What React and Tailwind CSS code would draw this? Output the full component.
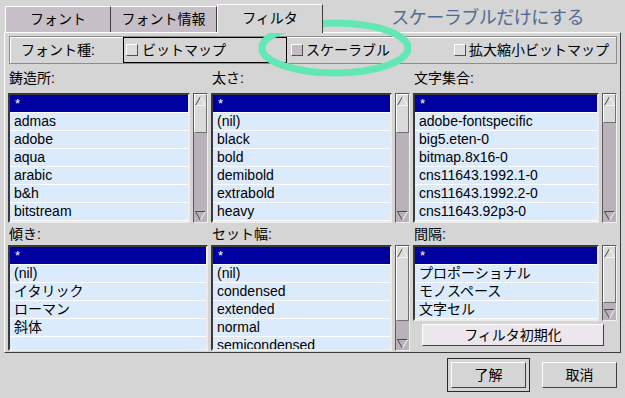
import React from 'react';

const foundries = ['admas', 'adobe', 'aqua', 'arabic', 'b&h', 'bitstream'];
const weights = ['(nil)', 'black', 'bold', 'demibold', 'extrabold', 'heavy'];
const charsets = ['adobe-fontspecific', 'big5.eten-0', 'bitmap.8x16-0', 'cns11643.1992.1-0', 'cns11643.1992.2-0', 'cns11643.92p3-0'];
const slants = ['(nil)', 'イタリック', 'ローマン', '斜体', ''];
const widths = ['(nil)', 'condensed', 'extended', 'normal', 'semicondensed'];
const spacings = ['プロポーショナル', 'モノスペース', '文字セル'];

function Arrow({ up }) {
  return (
    <svg width="11" height="10" viewBox="0 0 11 10" className="block">
      {up ? (
        <>
          <path d="M5.5 0.5 L0.5 9.5" stroke="#4a4a4a" fill="none" />
          <path d="M5.5 0.5 L10.5 9.5 L0.5 9.5" stroke="#f4f4f4" fill="none" />
        </>
      ) : (
        <>
          <path d="M10.5 0.5 L0.5 0.5 L5.5 9.5" stroke="#4a4a4a" fill="none" />
          <path d="M5.5 9.5 L10.5 0.5" stroke="#f4f4f4" fill="none" />
        </>
      )}
    </svg>
  );
}

function ScrollBar({ thumb }) {
  return (
    <div className="w-[15px] flex flex-col border border-t-[#5a5a5a] border-l-[#5a5a5a] border-r-[#f0f0f0] border-b-[#f0f0f0] bg-[#bab2ba]">
      <div className="flex flex-col bg-[#dadada] border-t border-l border-t-white border-l-white border-r border-b border-r-[#707070] border-b-[#707070]">
        <div className="h-[11px] flex items-center justify-center pt-[1px]">
          <Arrow up />
        </div>
        <div className={thumb} />
      </div>
      <div className="flex-1" />
      <div className="h-[12px] flex items-center justify-center">
        <Arrow />
      </div>
    </div>
  );
}

function ListBox({ items, className }) {
  return (
    <div className={`flex-1 overflow-hidden bg-[#dcebfb] border-2 border-t-[#3a3a3a] border-l-[#3a3a3a] border-r-[#ececec] border-b-[#ececec] ${className}`}>
      <div className="h-[18px] bg-[#0000a0] text-white border-b border-white pl-[5px] text-[13px] leading-[17px]">*</div>
      {items.map((it, i) => (
        <div key={i} className="h-[18px] border-b border-white pl-[4px] leading-[17px] whitespace-nowrap">
          {it}
        </div>
      ))}
    </div>
  );
}

function Check({ dark }) {
  return (
    <span className={`w-[12px] h-[12px] border border-t-white border-l-white border-r-[#505050] border-b-[#505050] ${dark ? 'bg-[#c4bcc4]' : 'bg-[#dcdcdc]'}`} />
  );
}

function Label({ children, h }) {
  return <div className={`${h} flex items-center pl-[1px]`}>{children}</div>;
}

export default function App() {
  return (
    <div className="relative w-[625px] h-[398px] overflow-hidden bg-[#d5d5d5] text-[14px] text-black font-['Liberation_Sans','Noto_Sans_CJK_JP',sans-serif]">
      {/* tabs */}
      <div className="flex items-end h-[32px] pl-[5px]">
        <div className="w-[106px] h-[26px] flex items-center justify-center bg-[#c7bfc7] border-t border-l border-t-white border-l-white border-r border-r-[#3c3c3c]">
          フォント
        </div>
        <div className="w-[106px] h-[26px] flex items-center justify-center bg-[#c7bfc7] border-t border-t-white border-r border-r-[#3c3c3c]">
          フォント情報
        </div>
        <div className="relative z-10 -mb-px w-[106px] h-[29px] flex items-center justify-center bg-[#d5d5d5] border-t border-l border-t-white border-l-white border-r border-r-[#3c3c3c] pb-[1px]">
          フィルタ
        </div>
        <div className="ml-auto self-start mt-[7px] mr-[41px] text-[18px] tracking-[-0.5px] text-[#4e6b92] leading-[22px]">
          スケーラブルだけにする
        </div>
      </div>

      {/* panel */}
      <div className="ml-[4px] w-[617px] border border-t-white border-l-white border-r-[#3c3c3c] border-b-[#3c3c3c] pt-[3px] pl-[3px] pb-[1px]">
        <div className="ml-[1px] w-[608px] h-[28px] flex items-center border border-[#8c8c8c] shadow-[inset_1px_1px_0_#ffffff]">
          <div className="w-[113px] pl-[11px]">フォント種:</div>
          <div className="w-[164px] h-full flex items-center gap-[4px] border border-black pl-[2px]">
            <Check />
            ビットマップ
          </div>
          <div className="flex items-center gap-[3px] ml-[4px]">
            <Check dark />
            スケーラブル
          </div>
          <div className="ml-auto flex items-center gap-[3px] pr-[7px]">
            <Check />
            拡大縮小ビットマップ
          </div>
        </div>

        <div className="grid grid-cols-[200px_199px_204px] gap-x-[3px]">
          {/* top row */}
          <div className="flex flex-col">
            <Label h="h-[29px]">鋳造所:</Label>
            <div className="flex gap-[3px] h-[130px]">
              <ListBox items={foundries} />
              <ScrollBar thumb="h-[26px]" />
            </div>
          </div>
          <div className="flex flex-col">
            <Label h="h-[29px]">太さ:</Label>
            <div className="flex gap-[3px] h-[130px]">
              <ListBox items={weights} />
              <ScrollBar thumb="h-[26px]" />
            </div>
          </div>
          <div className="flex flex-col">
            <Label h="h-[29px]">文字集合:</Label>
            <div className="flex gap-[3px] h-[130px]">
              <ListBox items={charsets} />
              <ScrollBar thumb="h-[16px]" />
            </div>
          </div>

          {/* bottom row */}
          <div className="flex flex-col">
            <Label h="h-[22px]">傾き:</Label>
            <div className="flex h-[106px]">
              <ListBox items={slants} />
            </div>
          </div>
          <div className="flex flex-col">
            <Label h="h-[22px]">セット幅:</Label>
            <div className="flex gap-[3px] h-[106px]">
              <ListBox items={widths} />
              <ScrollBar thumb="h-[62px]" />
            </div>
          </div>
          <div className="flex flex-col">
            <Label h="h-[22px]">間隔:</Label>
            <div className="flex gap-[3px] h-[76px]">
              <ListBox items={spacings} />
              <ScrollBar thumb="h-[44px]" />
            </div>
            <button className="mt-[3px] ml-[9px] w-[182px] h-[22px] flex items-center justify-center bg-[#ece7ec] border border-t-white border-l-white border-r-[#404040] border-b-[#404040]">
              フィルタ初期化
            </button>
          </div>
        </div>
      </div>

      {/* dialog buttons */}
      <div className="flex justify-end items-center gap-[12px] pr-[8px] pt-[5px]">
        <div className="p-[3px] border border-t-[#2a2a2a] border-l-[#2a2a2a] border-r-[#2a2a2a] border-b-[#2a2a2a]">
          <button className="w-[75px] h-[26px] flex items-center justify-center bg-[#d5d5d5] border border-t-white border-l-white border-r-[#404040] border-b-[#404040]">
            了解
          </button>
        </div>
        <button className="w-[75px] h-[26px] flex items-center justify-center bg-[#d5d5d5] border border-t-white border-l-white border-r-[#404040] border-b-[#404040]">
          取消
        </button>
      </div>

      {/* hand-drawn annotation ring */}
      <svg className="absolute left-[256px] top-[18px] pointer-events-none" width="158" height="60" viewBox="0 0 158 60">
        <ellipse cx="79" cy="30" rx="73" ry="25" fill="none" stroke="#62e7b5" strokeWidth="7" />
      </svg>
    </div>
  );
}
